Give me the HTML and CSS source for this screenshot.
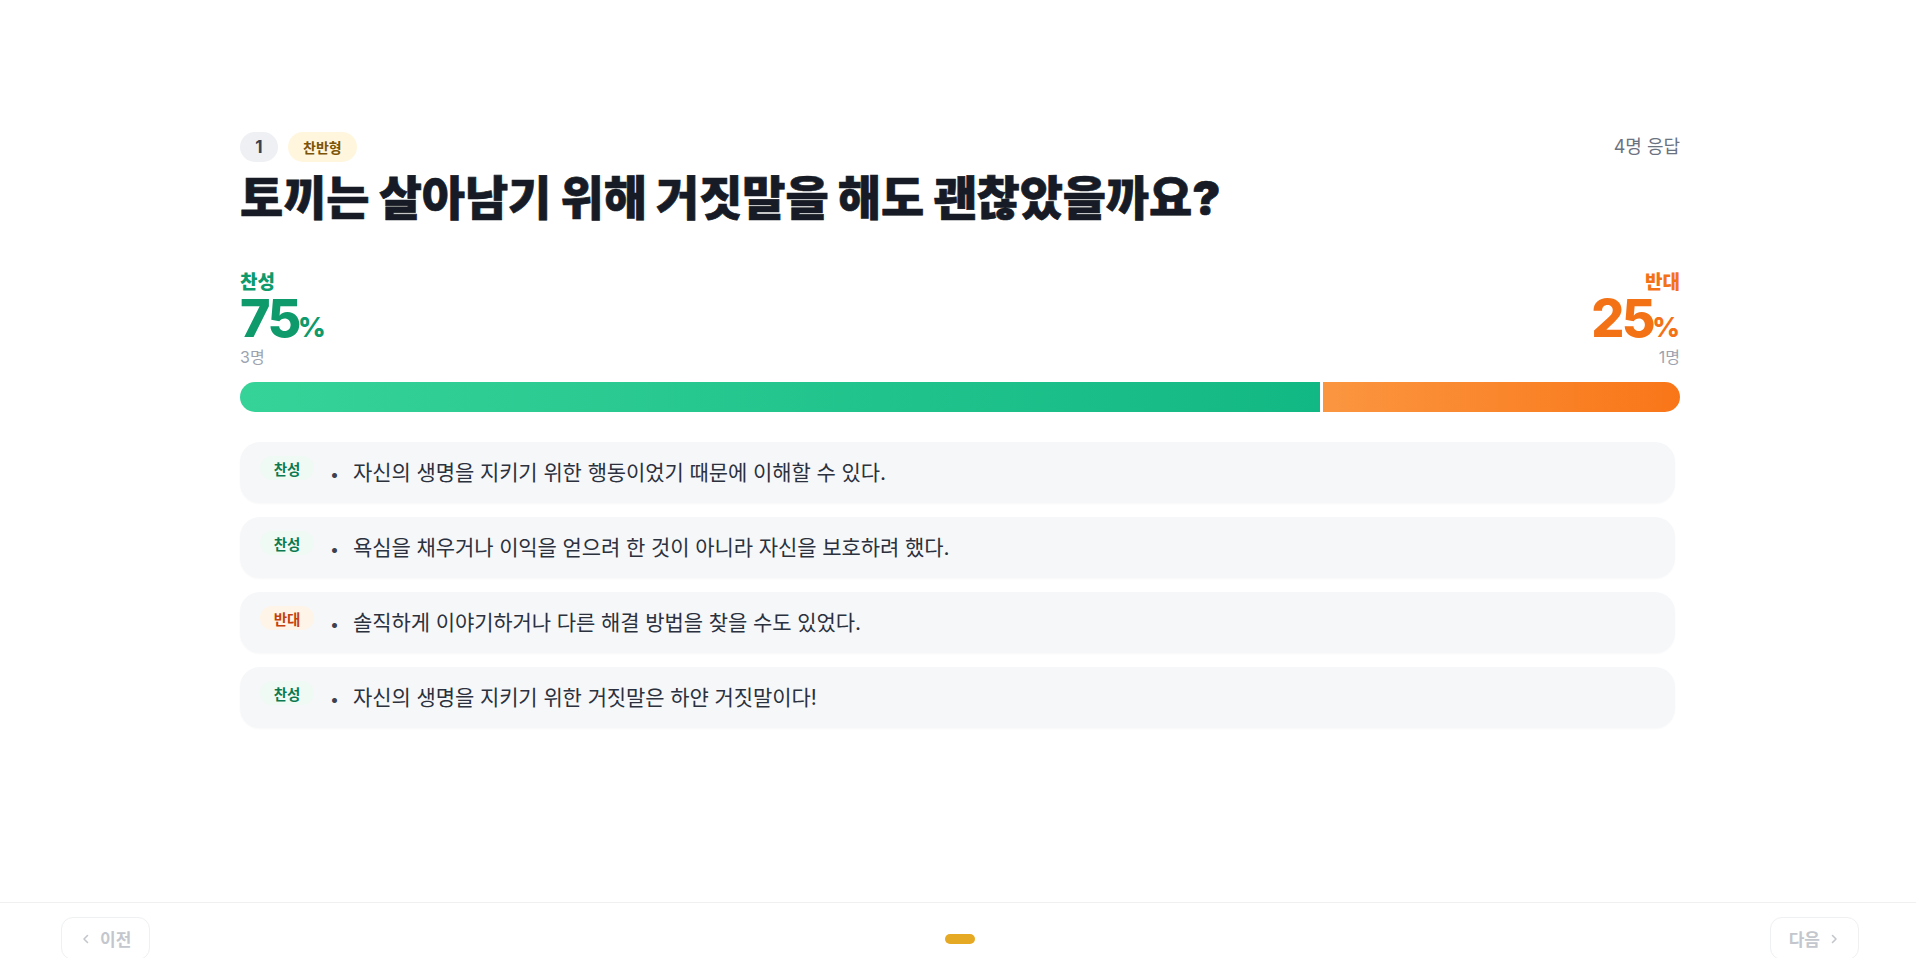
FILE: index.html
```html
<!DOCTYPE html>
<html lang="ko">
<head>
    <meta charset="UTF-8">
    <meta name="viewport" content="width=device-width, initial-scale=1.0">
    <title>찬반형 결과</title>
    <link rel="stylesheet" href="styles.css">
</head>
<body>
    <div class="page">
        <main class="content">
            <div class="question-head">
                <div class="question-meta">
                    <span class="q-number">1</span>
                    <span class="q-type">찬반형</span>
                </div>
                <span class="respondents">4명 응답</span>
            </div>

            <h1 class="question-title">토끼는 살아남기 위해 거짓말을 해도 괜찮았을까요?</h1>

            <div class="stats">
                <div class="stat stat-yes">
                    <div class="stat-label">찬성</div>
                    <div class="stat-percent">75<span class="pct">%</span></div>
                    <div class="stat-count">3명</div>
                </div>
                <div class="stat stat-no">
                    <div class="stat-label">반대</div>
                    <div class="stat-percent">25<span class="pct">%</span></div>
                    <div class="stat-count">1명</div>
                </div>
            </div>

            <div class="bar">
                <div class="bar-yes" style="width: 75%"></div>
                <div class="bar-no"></div>
            </div>

            <ul class="answers">
                <li class="answer">
                    <span class="tag tag-yes">찬성</span>
                    <p class="answer-text"><span class="bullet">•</span>자신의 생명을 지키기 위한 행동이었기 때문에 이해할 수 있다.</p>
                </li>
                <li class="answer">
                    <span class="tag tag-yes">찬성</span>
                    <p class="answer-text"><span class="bullet">•</span>욕심을 채우거나 이익을 얻으려 한 것이 아니라 자신을 보호하려 했다.</p>
                </li>
                <li class="answer">
                    <span class="tag tag-no">반대</span>
                    <p class="answer-text"><span class="bullet">•</span>솔직하게 이야기하거나 다른 해결 방법을 찾을 수도 있었다.</p>
                </li>
                <li class="answer">
                    <span class="tag tag-yes">찬성</span>
                    <p class="answer-text"><span class="bullet">•</span>자신의 생명을 지키기 위한 거짓말은 하얀 거짓말이다!</p>
                </li>
            </ul>
        </main>

        <footer class="footer">
            <button class="nav-btn" disabled>
                <svg width="12" height="12" viewBox="0 0 12 12"><path d="M7.5 2.5 4 6l3.5 3.5" fill="none" stroke="currentColor" stroke-width="1.6" stroke-linecap="round" stroke-linejoin="round"/></svg>
                이전
            </button>
            <div class="dots"><span class="dot active"></span></div>
            <button class="nav-btn" disabled>
                다음
                <svg width="12" height="12" viewBox="0 0 12 12"><path d="M4.5 2.5 8 6 4.5 9.5" fill="none" stroke="currentColor" stroke-width="1.6" stroke-linecap="round" stroke-linejoin="round"/></svg>
            </button>
        </footer>
    </div>
</body>
</html>
```

FILE: styles.css
```css
/* General */
body {
    margin: 0;
    padding: 0;
    font-family: "Inter", "Noto Sans CJK KR", sans-serif;
    background-color: #fff;
    color: #1b1f2a;
}

.page {
    display: flex;
    flex-direction: column;
}

.content {
    box-sizing: border-box;
    height: calc(100vh - 56px);
    width: 1440px;
    margin-left: calc((100% - 1436px) / 2);
    padding-top: 132px;
}

/* Question header */
.question-head {
    display: flex;
    justify-content: space-between;
    align-items: center;
}

.question-meta {
    display: flex;
    gap: 10px;
}

.q-number,
.q-type {
    display: flex;
    align-items: center;
    justify-content: center;
    height: 30px;
    border-radius: 15px;
    font-weight: 700;
}

.q-number {
    width: 38px;
    background-color: #eef0f3;
    color: #374151;
    font-size: 17px;
}

.q-type {
    padding: 0 15px;
    background-color: #fff6dd;
    color: #7c5408;
    font-size: 14px;
}

.respondents {
    font-size: 18px;
    color: #6b7280;
    margin-top: -4px;
}

.question-title {
    margin: 6px 0 0;
    font-size: 47px;
    line-height: 60px;
    font-weight: 900;
    letter-spacing: -0.1px;
    color: #161b26;
    -webkit-text-stroke: 0.7px #161b26;
}

/* Stats */
.stats {
    display: flex;
    justify-content: space-between;
    margin-top: 45px;
}

.stat-no {
    text-align: right;
}

.stat-label {
    font-size: 19px;
    line-height: 20px;
    font-weight: 800;
}

.stat-percent {
    margin-top: 3px;
    font-size: 52px;
    line-height: 46px;
    font-weight: 800;
    letter-spacing: -2.5px;
}

.pct {
    font-size: 27px;
    letter-spacing: 0;
    margin-left: -1px;
}

.stat-count {
    margin-top: -4px;
    font-size: 16px;
    line-height: 20px;
    color: #9ca3af;
}

.stat-yes .stat-label,
.stat-yes .stat-percent {
    color: #0e9a6b;
}

.stat-no .stat-label,
.stat-no .stat-percent {
    color: #f47216;
}

/* Bar */
.bar {
    display: flex;
    height: 30px;
    margin-top: 15px;
    border-radius: 15px;
    overflow: hidden;
}

.bar-yes {
    background: linear-gradient(90deg, #36d399, #12b883);
}

.bar-no {
    flex: 1;
    margin-left: 3px;
    background: linear-gradient(90deg, #fb9640, #f97618);
}

/* Answers */
.answers {
    list-style: none;
    margin: 30px 5px 0 0;
    padding: 0;
    display: flex;
    flex-direction: column;
    gap: 14px;
}

.answer {
    display: flex;
    align-items: flex-start;
    box-sizing: border-box;
    height: 61px;
    padding: 14px 20px;
    border-radius: 20px;
    background-color: #f6f7f9;
    box-shadow: 0 1px 2px rgba(0, 0, 0, 0.03);
}

.tag {
    display: flex;
    align-items: center;
    justify-content: center;
    height: 24px;
    width: 54px;
    border-radius: 12px;
    font-size: 14.5px;
    font-weight: 700;
}

.tag-yes {
    background-color: #effaf4;
    color: #0b7a52;
}

.tag-no {
    background-color: #fff4e8;
    color: #c2410c;
}

.answer-text {
    margin: 0 0 0 16px;
    font-size: 21px;
    line-height: 33px;
    letter-spacing: -0.1px;
    color: #2b313d;
}

.bullet {
    display: inline-block;
    width: 23px;
    font-size: 16px;
    color: #3b4250;
}

/* Footer */
.footer {
    box-sizing: border-box;
    height: 56px;
    overflow: hidden;
    display: flex;
    justify-content: space-between;
    align-items: flex-start;
    padding: 14px 57px 0 61px;
    border-top: 1px solid #eef0f2;
}

.nav-btn {
    display: flex;
    align-items: center;
    gap: 8px;
    height: 43px;
    padding: 0 18px;
    border: 1px solid #eef0f2;
    border-radius: 12px;
    background-color: #fff;
    color: #c3c7cd;
    font-family: inherit;
    font-size: 17px;
    font-weight: 700;
}

.dots {
    display: flex;
    gap: 6px;
    padding-top: 17px;
}

.dot {
    width: 30px;
    height: 10px;
    border-radius: 5px;
    background-color: #e6a923;
}
```
